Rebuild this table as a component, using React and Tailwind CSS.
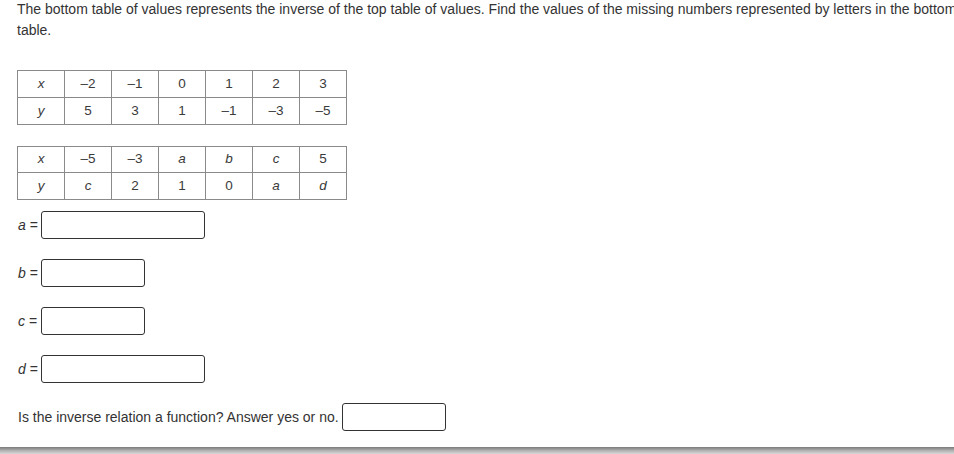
import React from "react";

const top = {
  x: ["–2", "–1", "0", "1", "2", "3"],
  y: ["5", "3", "1", "–1", "–3", "–5"],
};
const bottom = {
  x: [["–5"], ["–3"], ["a", true], ["b", true], ["c", true], ["5"]],
  y: [["c", true], ["2"], ["1"], ["0"], ["a", true], ["d", true]],
};

function Cell({ children, italic }) {
  return (
    <td
      className={
        "w-[47px] border border-[#8a8a8a] p-0 text-center align-middle " +
        (italic ? "italic" : "")
      }
    >
      {children}
    </td>
  );
}

function ValTable({ data, rowH, className }) {
  return (
    <table
      className={
        "border-collapse border border-[#3a3a3a] text-[13.5px] text-[#3a3a3a] " +
        className
      }
    >
      <tbody>
        <tr className={rowH[0]}>
          <Cell italic>x</Cell>
          {data.x.map((v, i) => (
            <Cell key={i} italic={Array.isArray(v) && v[1]}>
              {Array.isArray(v) ? v[0] : v}
            </Cell>
          ))}
        </tr>
        <tr className={rowH[1]}>
          <Cell italic>y</Cell>
          {data.y.map((v, i) => (
            <Cell key={i} italic={Array.isArray(v) && v[1]}>
              {Array.isArray(v) ? v[0] : v}
            </Cell>
          ))}
        </tr>
      </tbody>
    </table>
  );
}

function Answer({ letter, widthClass, className }) {
  return (
    <div className={"flex items-center " + className}>
      <span className="w-[24px] pl-[1px] text-[14px] text-[#333]">
        <span className="italic">{letter}</span> =
      </span>
      <div
        className={
          "h-[28px] rounded-[3px] border border-[#333] bg-white " + widthClass
        }
      />
    </div>
  );
}

export default function App() {
  return (
    <div
      className="relative h-[454px] w-[954px] overflow-hidden bg-white"
      style={{ fontFamily: '"Liberation Sans", Arial, sans-serif' }}
    >
      <div className="pl-[17px]">
        <p className="mt-[-1px] whitespace-nowrap text-[14px] leading-[21px] text-[#333]">
          The bottom table of values represents the inverse of the top table of
          values. Find the values of the missing numbers represented by letters
          in the bottom
          <br />
          table.
        </p>
        <ValTable
          data={top}
          rowH={["h-[27px]", "h-[27px]"]}
          className="mt-[29px]"
        />
        <ValTable
          data={bottom}
          rowH={["h-[26px]", "h-[27px]"]}
          className="mt-[21px]"
        />
        <Answer letter="a" widthClass="w-[164px]" className="mt-[11px]" />
        <Answer letter="b" widthClass="w-[104px]" className="mt-[20px]" />
        <Answer letter="c" widthClass="w-[104px]" className="mt-[20px]" />
        <Answer letter="d" widthClass="w-[164px]" className="mt-[20px]" />
        <div className="mt-[20px] flex items-center">
          <span className="pl-[1px] text-[14px] text-[#333]">
            Is the inverse relation a function? Answer yes or no.
          </span>
          <div className="ml-[3px] h-[28px] w-[104px] rounded-[3px] border border-[#333] bg-white" />
        </div>
      </div>
      <div className="absolute bottom-0 left-0 h-[7px] w-full bg-gradient-to-b from-[#7a7a7a] via-[#b0b0b0] to-[#d8d8d8]" />
    </div>
  );
}
